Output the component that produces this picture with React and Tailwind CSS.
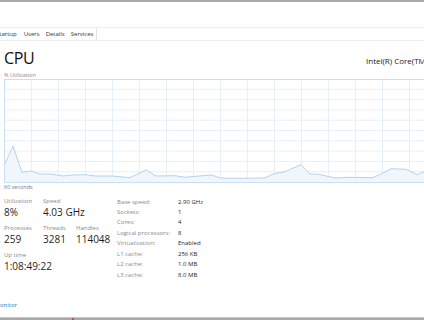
const font = { fontFamily: '"Open Sans", "Noto Sans", sans-serif' };

const points = [
  [0, 86.7], [9, 67.3], [18, 93.3], [27, 92], [36, 95], [46, 95], [59, 97], [68, 96],
  [81, 95.7], [91, 97], [108, 97], [126, 98.7], [142, 91], [152, 97], [171, 96.7],
  [181, 98.3], [191, 97.3], [208, 96], [215, 98.7], [224, 99.3], [261, 99], [269, 95],
  [281, 92.7], [297, 85.7], [306, 95], [315, 95.3], [331, 99], [344, 98.3], [369, 98.7],
  [381, 93], [387, 89.7], [402, 90.3], [413, 95.7], [424, 91],
];

function Chart() {
  const line = points.map((p) => p.join(",")).join(" ");
  const area = `0,103 ${line} 424,103`;
  const vlines = Array.from({ length: 15 }, (_, i) => 27.5 + 27 * i);
  const hlines = Array.from({ length: 9 }, (_, i) => 10.3 * (i + 1));
  return (
    <svg width="424" height="104" viewBox="0 0 424 104" className="block shrink-0">
      {vlines.map((x) => (
        <line key={x} x1={x} y1="0" x2={x} y2="104" stroke="#e6f0f9" strokeWidth="1" />
      ))}
      {hlines.map((y) => (
        <line key={y} x1="0" y1={y} x2="424" y2={y} stroke="#e6f0f9" strokeWidth="1" />
      ))}
      <polygon points={area} fill="#f1f6fc" />
      <polyline points={line} fill="none" stroke="#b3d3ee" strokeWidth="1" />
      <rect x="0.5" y="0.5" width="430" height="103" fill="none" stroke="#c9dff2" strokeWidth="1" />
    </svg>
  );
}

function Stat({ label, value, className }) {
  return (
    <div className={className}>
      <div className="text-[6px] leading-[8px] text-[#8a8a8a]">{label}</div>
      <div className="text-[10px] leading-[12px] text-[#1f1f1f] mt-[1.5px] whitespace-nowrap">{value}</div>
    </div>
  );
}

const specs = [
  ["Base speed:", "2.90 GHz"],
  ["Sockets:", "1"],
  ["Cores:", "4"],
  ["Logical processors:", "8"],
  ["Virtualization:", "Enabled"],
  ["L1 cache:", "256 KB"],
  ["L2 cache:", "1.0 MB"],
  ["L3 cache:", "8.0 MB"],
];

export default function App() {
  return (
    <div className="w-[424px] h-[320px] overflow-hidden bg-white flex flex-col" style={font}>
      <div className="h-[2px] bg-[#a9abae] shrink-0" />
      <div className="h-[25px] shrink-0" />

      {/* tabs */}
      <div className="h-[14px] shrink-0 border-t border-b border-[#ececec] flex items-stretch text-[6px] text-[#333]">
        <div className="flex items-center ml-[-4px] pr-[4px]">Startup</div>
        <div className="flex items-center px-[3px]">Users</div>
        <div className="flex items-center px-[3px]">Details</div>
        <div className="flex items-center px-[3px] border-r border-[#e4e4e4]">Services</div>
      </div>

      <div className="flex flex-col pl-[4px]">
        <div className="flex items-end justify-between mt-[9px] h-[17px]">
          <div className="text-[16px] leading-[17px] text-[#111] tracking-[-0.3px]">CPU</div>
          <div className="text-[8px] leading-[10px] text-[#222] whitespace-nowrap w-[58px] overflow-hidden mb-[1px]">
            Intel(R) Core(TM)
          </div>
        </div>
        <div className="text-[5.5px] leading-[8px] text-[#8a8a8a] mt-[4px]">% Utilization</div>
        <Chart />
        <div className="text-[5.5px] leading-[8px] text-[#777]">60 seconds</div>

        <div className="flex mt-[5.5px]">
          <div className="flex flex-col w-[113px]">
            <div className="flex">
              <Stat label="Utilization" value="8%" className="w-[39px]" />
              <Stat label="Speed" value="4.03 GHz" />
            </div>
            <div className="flex mt-[5.5px]">
              <Stat label="Processes" value="259" className="w-[39px]" />
              <Stat label="Threads" value="3281" className="w-[33px]" />
              <Stat label="Handles" value="114048" />
            </div>
            <div className="flex mt-[5.5px]">
              <Stat label="Up time" value="1:08:49:22" />
            </div>
          </div>
          <div className="grid grid-cols-[61px_auto] text-[6px] leading-[10.43px]">
            {specs.map(([k, v]) => (
              <div key={k} className="contents">
                <div className="text-[#8a8a8a] whitespace-nowrap">{k}</div>
                <div className="text-[#1f1f1f] whitespace-nowrap">{v}</div>
              </div>
            ))}
          </div>
        </div>
      </div>

      <div className="flex-1" />
      <div className="text-[6px] leading-[8px] text-[#2e7ad1] mb-[8px]">onitor</div>
      <div className="h-[3px] shrink-0 bg-[#a9a9a9] border-t border-[#c8c8c8] flex">
        <div className="ml-[72px] w-[2px] bg-[#c0504d]" />
      </div>
    </div>
  );
}
